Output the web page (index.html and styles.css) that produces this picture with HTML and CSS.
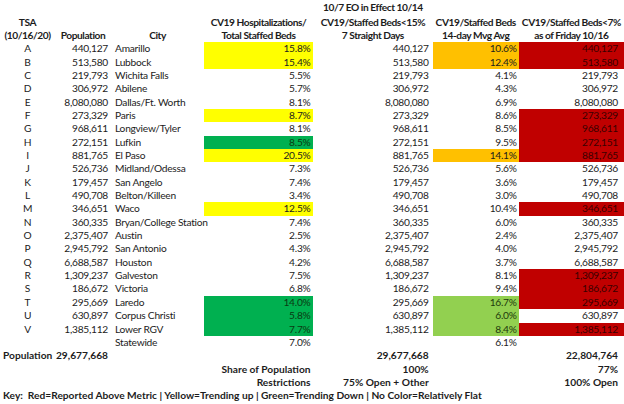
FILE: index.html
```html
<!DOCTYPE html>
<html>
<head>
<meta charset="utf-8">
<link rel="stylesheet" href="styles.css">
</head>
<body>
<table class="sheet">
  <colgroup>
    <col class="c-tsa"><col class="c-pop"><col class="c-city"><col class="c-hosp"><col class="c-eo"><col class="c-mvg"><col class="c-seven">
  </colgroup>
  <tbody>
    <tr class="h1"><td></td><td></td><td></td><td></td><td class="hd">10/7 EO in Effect 10/14</td><td></td><td></td></tr>
    <tr><td class="hd">TSA</td><td></td><td></td><td class="hd">CV19 Hospitalizations/</td><td class="hd">CV19/Staffed Beds&lt;15%</td><td class="hd">CV19/Staffed Beds</td><td class="hd">CV19/Staffed Beds&lt;7%</td></tr>
    <tr><td class="hd">(10/16/20)</td><td class="hd">Population</td><td class="hd">City</td><td class="hd">Total Staffed Beds</td><td class="hd">7 Straight Days</td><td class="hd">14-day Mvg Avg</td><td class="hd">as of Friday 10/16</td></tr>

    <tr><td class="tsa">A</td><td class="num">440,127</td><td class="city">Amarillo</td><td class="pct yellow">15.8%</td><td class="eo">440,127</td><td class="mvg orange">10.6%</td><td class="sev red">440,127</td></tr>
    <tr><td class="tsa">B</td><td class="num">513,580</td><td class="city">Lubbock</td><td class="pct yellow">15.4%</td><td class="eo">513,580</td><td class="mvg orange">12.4%</td><td class="sev red">513,580</td></tr>
    <tr><td class="tsa">C</td><td class="num">219,793</td><td class="city">Wichita Falls</td><td class="pct">5.5%</td><td class="eo">219,793</td><td class="mvg">4.1%</td><td class="sev">219,793</td></tr>
    <tr><td class="tsa">D</td><td class="num">306,972</td><td class="city">Abilene</td><td class="pct">5.7%</td><td class="eo">306,972</td><td class="mvg">4.3%</td><td class="sev">306,972</td></tr>
    <tr><td class="tsa">E</td><td class="num">8,080,080</td><td class="city">Dallas/Ft. Worth</td><td class="pct">8.1%</td><td class="eo">8,080,080</td><td class="mvg">6.9%</td><td class="sev">8,080,080</td></tr>
    <tr><td class="tsa">F</td><td class="num">273,329</td><td class="city">Paris</td><td class="pct yellow">8.7%</td><td class="eo">273,329</td><td class="mvg">8.6%</td><td class="sev red">273,329</td></tr>
    <tr><td class="tsa">G</td><td class="num">968,611</td><td class="city">Longview/Tyler</td><td class="pct">8.1%</td><td class="eo">968,611</td><td class="mvg">8.5%</td><td class="sev red">968,611</td></tr>
    <tr><td class="tsa">H</td><td class="num">272,151</td><td class="city">Lufkin</td><td class="pct green">8.5%</td><td class="eo">272,151</td><td class="mvg">9.5%</td><td class="sev red">272,151</td></tr>
    <tr><td class="tsa">I</td><td class="num">881,765</td><td class="city">El Paso</td><td class="pct yellow">20.5%</td><td class="eo">881,765</td><td class="mvg orange">14.1%</td><td class="sev red">881,765</td></tr>
    <tr><td class="tsa">J</td><td class="num">526,736</td><td class="city">Midland/Odessa</td><td class="pct">7.3%</td><td class="eo">526,736</td><td class="mvg">5.6%</td><td class="sev">526,736</td></tr>
    <tr><td class="tsa">K</td><td class="num">179,457</td><td class="city">San Angelo</td><td class="pct">7.4%</td><td class="eo">179,457</td><td class="mvg">3.6%</td><td class="sev">179,457</td></tr>
    <tr><td class="tsa">L</td><td class="num">490,708</td><td class="city">Belton/Killeen</td><td class="pct">3.4%</td><td class="eo">490,708</td><td class="mvg">3.0%</td><td class="sev">490,708</td></tr>
    <tr><td class="tsa">M</td><td class="num">346,651</td><td class="city">Waco</td><td class="pct yellow">12.5%</td><td class="eo">346,651</td><td class="mvg">10.4%</td><td class="sev red">346,651</td></tr>
    <tr><td class="tsa">N</td><td class="num">360,335</td><td class="city">Bryan/College Station</td><td class="pct">7.4%</td><td class="eo">360,335</td><td class="mvg">6.0%</td><td class="sev">360,335</td></tr>
    <tr><td class="tsa">O</td><td class="num">2,375,407</td><td class="city">Austin</td><td class="pct">2.5%</td><td class="eo">2,375,407</td><td class="mvg">2.4%</td><td class="sev">2,375,407</td></tr>
    <tr><td class="tsa">P</td><td class="num">2,945,792</td><td class="city">San Antonio</td><td class="pct">4.3%</td><td class="eo">2,945,792</td><td class="mvg">4.0%</td><td class="sev">2,945,792</td></tr>
    <tr><td class="tsa">Q</td><td class="num">6,688,587</td><td class="city">Houston</td><td class="pct">4.2%</td><td class="eo">6,688,587</td><td class="mvg">3.7%</td><td class="sev">6,688,587</td></tr>
    <tr><td class="tsa">R</td><td class="num">1,309,237</td><td class="city">Galveston</td><td class="pct">7.5%</td><td class="eo">1,309,237</td><td class="mvg">8.1%</td><td class="sev red">1,309,237</td></tr>
    <tr><td class="tsa">S</td><td class="num">186,672</td><td class="city">Victoria</td><td class="pct">6.8%</td><td class="eo">186,672</td><td class="mvg">9.4%</td><td class="sev red">186,672</td></tr>
    <tr><td class="tsa">T</td><td class="num">295,669</td><td class="city">Laredo</td><td class="pct green">14.0%</td><td class="eo">295,669</td><td class="mvg lime">16.7%</td><td class="sev red">295,669</td></tr>
    <tr><td class="tsa">U</td><td class="num">630,897</td><td class="city">Corpus Christi</td><td class="pct green">5.8%</td><td class="eo">630,897</td><td class="mvg lime">6.0%</td><td class="sev">630,897</td></tr>
    <tr><td class="tsa">V</td><td class="num">1,385,112</td><td class="city">Lower RGV</td><td class="pct green">7.7%</td><td class="eo">1,385,112</td><td class="mvg lime">8.4%</td><td class="sev red">1,385,112</td></tr>

    <tr><td></td><td></td><td class="city">Statewide</td><td class="pct">7.0%</td><td></td><td class="mvg">6.1%</td><td></td></tr>
    <tr class="bold"><td class="lbl">Population</td><td class="num">29,677,668</td><td></td><td></td><td class="eo">29,677,668</td><td></td><td class="sev">22,804,764</td></tr>
    <tr class="bold"><td></td><td></td><td></td><td class="pct">Share of Population</td><td class="eo">100%</td><td></td><td class="sev">77%</td></tr>
    <tr class="bold"><td></td><td></td><td></td><td class="pct">Restrictions</td><td class="eo">75% Open + Other</td><td></td><td class="sev">100% Open</td></tr>
    <tr class="bold"><td class="lbl" colspan="7">Key:&nbsp; Red=Reported Above Metric | Yellow=Trending up | Green=Trending Down | No Color=Relatively Flat</td></tr>
  </tbody>
</table>
</body>
</html>
```

FILE: styles.css
```css
html, body {
  margin: 0;
  padding: 0;
  background: #ffffff;
}

.sheet {
  border-collapse: collapse;
  table-layout: fixed;
  width: 624px;
  font-family: Lato, "Liberation Sans", sans-serif;
  font-size: 10.2px;
  letter-spacing: -0.25px;
  color: #1c1c1c;
}

.c-tsa { width: 55px; }
.c-pop { width: 56px; }
.c-city { width: 93px; }
.c-hosp { width: 109px; }
.c-eo { width: 119.7px; }
.c-mvg { width: 86px; }
.c-seven { width: 105.3px; }

.sheet td {
  padding: 0;
  height: 13.35px;
  line-height: 13.35px;
  white-space: nowrap;
  overflow: visible;
  vertical-align: bottom;
}

.sheet tr.h1 td {
  height: 15.6px;
  vertical-align: middle;
}

.hd {
  font-weight: 700;
  text-align: center;
  letter-spacing: -0.45px;
}

.bold td {
  font-weight: 700;
  letter-spacing: 0;
}

.tsa { text-align: center; }
.num { text-align: right; padding-right: 3px !important; }
.city { text-align: left; padding-left: 4px !important; }
.pct { text-align: right; padding-right: 2.5px !important; }
.eo { text-align: right; padding-right: 4px !important; }
.mvg { text-align: right; padding-right: 2px !important; }
.sev { text-align: right; padding-right: 6px !important; }
.lbl { text-align: left; padding-left: 3px !important; }

.yellow { background: #ffff00; }
.green { background: #00b050; color: #0b3a12; }
.orange { background: #ffc000; }
.lime { background: #92d050; color: #1e3a0c; }
.red { background: #c00000; color: #3a0000; }
```
